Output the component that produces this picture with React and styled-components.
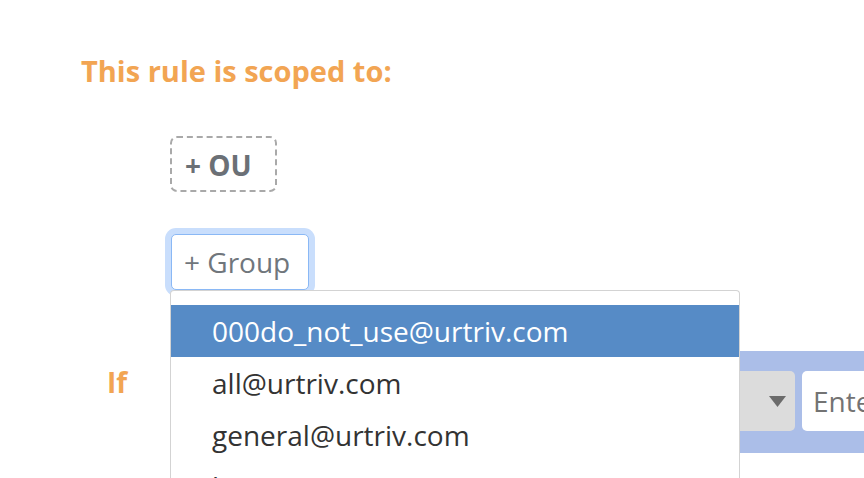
import React from "react";
import styled, { createGlobalStyle } from "styled-components";

const Global = createGlobalStyle`
  html, body { margin: 0; padding: 0; background: #fff; }
  body { font-family: "Open Sans", "DejaVu Sans", sans-serif; overflow: hidden; }
  * { box-sizing: border-box; }
`;

const Page = styled.div`
  position: relative;
  width: 864px;
  height: 478px;
  overflow: hidden;
  padding: 53px 0 0 81px;
`;

const Title = styled.h3`
  margin: 0;
  font-size: 29px;
  line-height: 36px;
  font-weight: 700;
  color: #f2a553;
`;

const Scope = styled.div`
  margin-top: 47px;
  padding-left: 89px;
  display: flex;
  flex-direction: column;
  align-items: flex-start;
  gap: 42px;
`;

const Chip = styled.button`
  height: 56px;
  padding: 2px 23px 0 13px;
  border: 2px dashed #a9a9a9;
  border-radius: 7px;
  background: #fff;
  font-family: inherit;
  font-size: 28px;
  font-weight: 700;
  line-height: 50px;
  color: #6b7076;
  text-align: left;
`;

const GroupBox = styled.div`
  position: relative;
  margin-left: 1px;
  z-index: 2;
`;

const GroupInput = styled.div`
  width: 138px;
  height: 56px;
  padding-left: 12px;
  border: 1.5px solid #8ab8f5;
  border-radius: 5px;
  box-shadow: 0 0 0 6px #c9defc;
  background: #fff;
  font-size: 28px;
  line-height: 54px;
  color: #70767c;
`;

const Menu = styled.ul`
  position: absolute;
  top: 100%;
  left: -1px;
  width: 570px;
  margin: 0;
  padding: 14px 0 0;
  list-style: none;
  background: #fff;
  border: 1px solid #d3d3d3;
  border-bottom: none;
  border-radius: 4px 4px 0 0;
`;

const Option = styled.li`
  height: 52px;
  padding-left: 41px;
  font-size: 28px;
  line-height: 52px;
  white-space: nowrap;
  background: ${(p) => (p.$active ? "#568bc6" : "#fff")};
  color: ${(p) => (p.$active ? "#fff" : "#333")};
`;

const CondRow = styled.div`
  margin-top: 61px;
  padding-left: 26px;
  display: flex;
  align-items: flex-start;
`;

const IfLabel = styled.div`
  flex: 0 0 80px;
  margin-top: 13px;
  font-size: 28px;
  line-height: 36px;
  font-weight: 700;
  color: #f2a553;
`;

const Band = styled.div`
  display: flex;
  gap: 7px;
  flex-shrink: 0;
  padding: 20px 0 22px 20px;
  background: #abbee8;
`;

const SelectBox = styled.div`
  width: 588px;
  height: 60px;
  display: flex;
  align-items: center;
  justify-content: flex-end;
  padding-right: 9px;
  background: #dcdcdc;
  border-radius: 5px;
`;

const ValueInput = styled.div`
  width: 260px;
  height: 60px;
  padding-left: 11px;
  background: #fff;
  border-radius: 5px;
  font-size: 28px;
  line-height: 60px;
  color: #737373;
  white-space: nowrap;
`;

const options = [
  "000do_not_use@urtriv.com",
  "all@urtriv.com",
  "general@urtriv.com",
  "hr@urtriv.com",
];

export default function App() {
  return (
    <>
      <Global />
      <Page>
        <Title>This rule is scoped to:</Title>
        <Scope>
          <Chip>+ OU</Chip>
          <GroupBox>
            <GroupInput>+ Group</GroupInput>
            <Menu>
              {options.map((o, i) => (
                <Option key={o} $active={i === 0}>
                  {o}
                </Option>
              ))}
            </Menu>
          </GroupBox>
        </Scope>
        <CondRow>
          <IfLabel>If</IfLabel>
          <Band>
            <SelectBox>
              <svg width="17" height="11" viewBox="0 0 17 11">
                <path d="M0 0 H17 L8.5 11 Z" fill="#6b6b6b" />
              </svg>
            </SelectBox>
            <ValueInput>Enter value</ValueInput>
          </Band>
        </CondRow>
      </Page>
    </>
  );
}
